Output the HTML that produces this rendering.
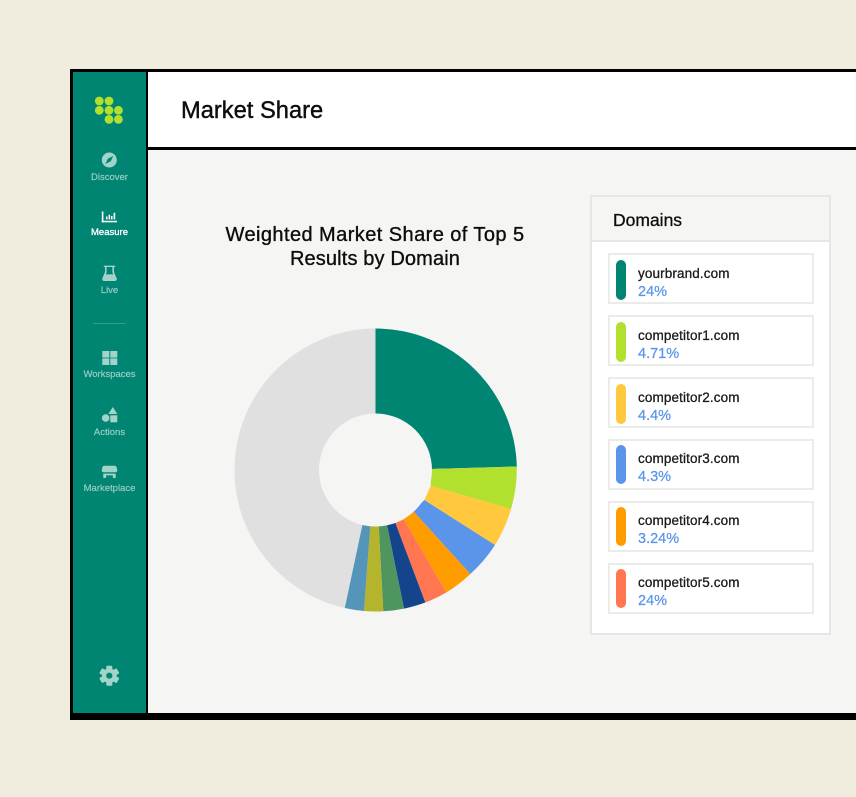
<!DOCTYPE html>
<html><head><meta charset="utf-8">
<style>
html,body{margin:0;padding:0}
body{width:856px;height:797px;background:#f0eddf;position:relative;overflow:hidden;font-family:"Liberation Sans",sans-serif;color:#0d0d0d}
.a{position:absolute}
.nav{position:absolute;left:73px;width:73px;text-align:center;font-size:9.5px;line-height:12px;color:#9ccfc5;white-space:nowrap;-webkit-text-stroke:.15px #9ccfc5}
.card{position:absolute;left:608px;width:202px;height:47px;border:2px solid #ebebe9;background:#fff}
.pill{position:absolute;left:6px;top:4px;width:10px;height:39px;border-radius:5px}
.d{position:absolute;left:28px;top:10px;font-size:13.5px;line-height:16px;color:#1a1a1a;white-space:nowrap;letter-spacing:.12px;-webkit-text-stroke:.3px #1a1a1a}
.p{position:absolute;left:28px;top:28px;font-size:14.5px;line-height:17px;color:#5b94ea;white-space:nowrap;-webkit-text-stroke:.25px #5b94ea}
.u .pill{top:5px;height:40px}
.u .d{top:11px}
.u .p{top:29px}
</style></head><body>
<div class="a" style="left:70px;top:69px;width:786px;height:651px;background:#000"></div>
<div class="a" style="left:73px;top:72px;width:73px;height:641px;background:#008573"></div>
<div class="a" style="left:148px;top:72px;width:708px;height:75px;background:#fff"></div>
<div class="a" style="left:148px;top:150px;width:708px;height:563px;background:#f5f5f3"></div>
<div class="a" style="left:181px;top:97px;font-size:23.7px;line-height:28px;white-space:nowrap;-webkit-text-stroke:.4px #0d0d0d">Market Share</div>
<svg class="a" style="left:0;top:0" width="856" height="797" viewBox="0 0 856 797">
<g fill="#b1e02f"><circle cx="99.3" cy="101" r="4.4"/><circle cx="109" cy="101" r="4.4"/><circle cx="99.3" cy="110.3" r="4.4"/><circle cx="109" cy="110.3" r="4.4"/><circle cx="118.4" cy="110.3" r="4.4"/><circle cx="109" cy="119.4" r="4.4"/><circle cx="118.4" cy="119.4" r="4.4"/></g>
<g fill="#a3d4ca">
<path fill-rule="evenodd" d="M109.3 152.5a7.5 7.5 0 1 0 0 15a7.5 7.5 0 1 0 0-15zM113.3 156l-2.6 5.4-5.4 2.6 2.6-5.4z"/>
<path fill-rule="evenodd" d="M105 272v-5h-1.2v-1.4h11.4v1.4H114v5l2.7 6.5a1.8 1.8 0 0 1-1.6 2.5h-11.2a1.8 1.8 0 0 1-1.6-2.5zM106.6 267v5.4l-.8 2h7.4l-.8-2V267z"/>
<rect x="102.3" y="351" width="7" height="6.6"/><rect x="110.3" y="351" width="7" height="6.6"/><rect x="102.3" y="358.4" width="7" height="6.6"/><rect x="110.3" y="358.4" width="7" height="6.6"/>
<path d="M112.8 407l4.5 7h-9z"/><circle cx="105.7" cy="418" r="3.8"/><rect x="110.3" y="415.3" width="7" height="7"/>
<path d="M104 465.8h11a1.6 1.6 0 0 1 1.5 1.2l.8 3.2a1.8 1.8 0 0 1-1.8 2H103.5a1.8 1.8 0 0 1-1.8-2l.8-3.2a1.6 1.6 0 0 1 1.5-1.2z"/>
<path d="M103.3 473.6h12.4V478h-2.8v-2.6h-6.8V478h-2.8z"/>
<g transform="translate(109.3 675.7)">
<circle r="5.2" fill="none" stroke="#a3d4ca" stroke-width="4.2"/>
<rect x="-3" y="-10" width="6" height="4.2" rx="1"/>
<rect x="-3" y="-10" width="6" height="4.2" rx="1" transform="rotate(60)"/>
<rect x="-3" y="-10" width="6" height="4.2" rx="1" transform="rotate(120)"/>
<rect x="-3" y="-10" width="6" height="4.2" rx="1" transform="rotate(180)"/>
<rect x="-3" y="-10" width="6" height="4.2" rx="1" transform="rotate(240)"/>
<rect x="-3" y="-10" width="6" height="4.2" rx="1" transform="rotate(300)"/>
</g>
</g>
<g fill="#fff"><rect x="101.8" y="211.5" width="1.6" height="10.8"/><rect x="101.8" y="220.8" width="15.2" height="1.5"/><rect x="106" y="216.5" width="1.5" height="2.9"/><rect x="108.6" y="214.8" width="1.5" height="4.6"/><rect x="111" y="216" width="1.5" height="3.4"/><rect x="113.6" y="212.8" width="1.6" height="6.6"/></g>
<rect x="93" y="323" width="33" height="1" fill="#2f9c8c"/>
<path d="M375.5 470V328.5A141.5 141.5 0 0 1 516.8 466.5L431 469Z" fill="#008573"/>
<path d="M431 469L516.8 466.5A141.5 141.5 0 0 1 511 509L430.7 485.7Z" fill="#b1e02f"/>
<path d="M430.7 485.7L511 509A141.5 141.5 0 0 1 495 545L424.3 500Z" fill="#ffc83d"/>
<path d="M424.3 500L495 545A141.5 141.5 0 0 1 470.3 574L413.3 511.3Z" fill="#5a95ea"/>
<path d="M413.3 511.3L470.3 574A141.5 141.5 0 0 1 446.3 592.5L403.7 519.3Z" fill="#ff9d00"/>
<path d="M403.7 519.3L446.3 592.5A141.5 141.5 0 0 1 425.3 602.5L395.3 522.7Z" fill="#ff7650"/>
<path d="M395.3 522.7L425.3 602.5A141.5 141.5 0 0 1 404 608.6L387 525Z" fill="#14458c"/>
<path d="M387 525L404 608.6A141.5 141.5 0 0 1 383.3 611.3L378.7 526Z" fill="#4f9560"/>
<path d="M378.7 526L383.3 611.3A141.5 141.5 0 0 1 364 611L370.3 526Z" fill="#b5b42d"/>
<path d="M370.3 526L364 611A141.5 141.5 0 0 1 344.7 608L362.3 525Z" fill="#5595ba"/>
<path d="M362.3 525L344.7 608A141.5 141.5 0 0 1 375.5 328.5V470Z" fill="#e0e0e0"/>
<circle cx="375.5" cy="470" r="56.5" fill="#f5f5f3"/>
</svg>
<div class="nav" style="top:172px">Discover</div>
<div class="nav" style="top:227px;color:#fff;-webkit-text-stroke:.3px #fff">Measure</div>
<div class="nav" style="top:285px">Live</div>
<div class="nav" style="top:369px">Workspaces</div>
<div class="nav" style="top:427px">Actions</div>
<div class="nav" style="top:483px">Marketplace</div>
<div class="a" style="left:190px;top:223px;width:370px;text-align:center;font-size:20px;line-height:24px;letter-spacing:.43px;-webkit-text-stroke:.35px #0d0d0d">Weighted Market Share of Top 5<br><span style="letter-spacing:.13px">Results by Domain</span></div>
<div class="a" style="left:590px;top:195px;width:237px;height:436px;border:2px solid #e6e6e4;background:#fff"></div>
<div class="a" style="left:592px;top:197px;width:237px;height:43px;background:#f5f5f3;border-bottom:2px solid #e6e6e4"></div>
<div class="a" style="left:613px;top:210px;font-size:17.5px;line-height:21px;-webkit-text-stroke:.3px #0d0d0d">Domains</div>
<div class="card u" style="top:253px"><div class="pill" style="background:#008573"></div><div class="d">yourbrand.com</div><div class="p">24%</div></div>
<div class="card u" style="top:315px"><div class="pill" style="background:#b1e02f"></div><div class="d">competitor1.com</div><div class="p">4.71%</div></div>
<div class="card u" style="top:377px"><div class="pill" style="background:#ffc83d"></div><div class="d">competitor2.com</div><div class="p">4.4%</div></div>
<div class="card" style="top:439px"><div class="pill" style="background:#5a95ea"></div><div class="d">competitor3.com</div><div class="p">4.3%</div></div>
<div class="card" style="top:501px"><div class="pill" style="background:#ff9d00"></div><div class="d">competitor4.com</div><div class="p">3.24%</div></div>
<div class="card" style="top:563px"><div class="pill" style="background:#ff7650"></div><div class="d">competitor5.com</div><div class="p">24%</div></div>
</body></html>
